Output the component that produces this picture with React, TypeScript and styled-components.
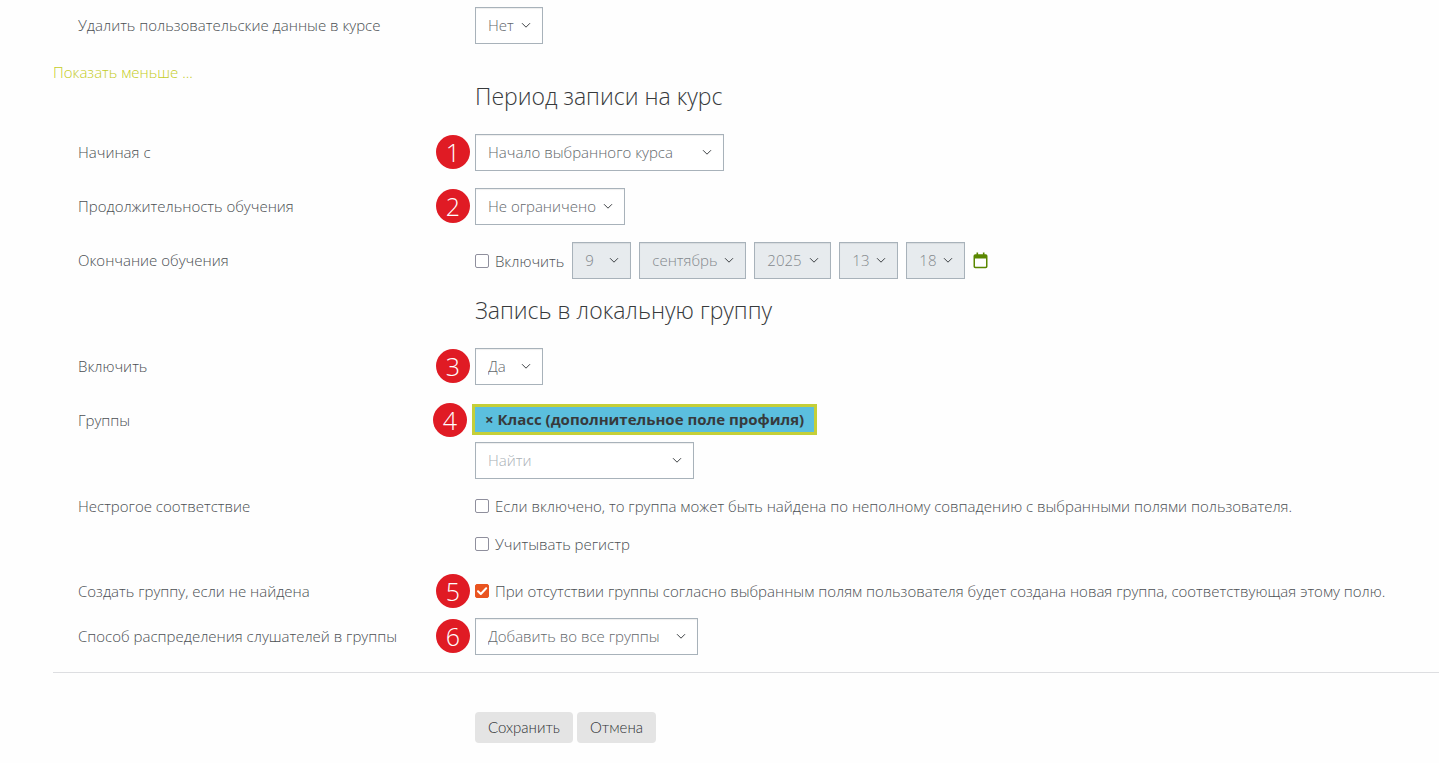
import React from "react";
import styled, { createGlobalStyle } from "styled-components";

const GlobalStyle = createGlobalStyle`
  *, *::before, *::after { box-sizing: border-box; }
  body {
    margin: 0;
    background: #fefefe;
    color: #4b4f53;
    font: 300 15px/20px "Open Sans", "Noto Sans", sans-serif;
  }
`;

const Form = styled.form`
  padding: 7px 0 20px 53px;
`;

const Row = styled.div<{ $space?: number }>`
  display: grid;
  grid-template-columns: minmax(0, 7fr) minmax(0, 17fr);
  padding-left: 25px;
  margin-bottom: ${(p) => p.$space ?? 17}px;
`;

const Caption = styled.div<{ $flush?: boolean }>`
  padding-top: ${(p) => (p.$flush ? 0 : 8)}px;
`;

const Content = styled.div`
  position: relative;
  grid-column: 2;
`;

const Badge = styled.span<{ $top?: number; $left?: number }>`
  position: absolute;
  top: ${(p) => p.$top ?? 1}px;
  left: ${(p) => p.$left ?? -39}px;
  width: 34px;
  height: 34px;
  border-radius: 50%;
  background: #e01b24;
  color: #fff;
  font-size: 25px;
  line-height: 34px;
  text-align: center;
`;

const MoreLink = styled.a`
  display: block;
  width: fit-content;
  margin-top: 18px;
  color: #c4cc1f;
  text-decoration: none;
`;

const Heading = styled.h3`
  grid-column: 2;
  margin: 0;
  color: #373a3c;
  font-size: 23px;
  font-weight: 300;
  line-height: 29px;
`;

const Field = styled.span<{ $width: number }>`
  position: relative;
  display: block;
  width: ${(p) => p.$width}px;
  max-width: 100%;

  select,
  input {
    display: block;
    width: 100%;
    height: 37px;
    margin: 0;
    padding: 0 24px 2px 12px;
    appearance: none;
    border: 1px solid #a8b2ba;
    border-radius: 0;
    background: #fff;
    box-shadow: inset 0 1px 1px rgba(0, 0, 0, 0.07);
    color: #63686c;
    font: inherit;
    opacity: 1;
  }

  select:disabled {
    background: #e7ebee;
    color: #84898d;
  }

  input::placeholder {
    color: #aab0b6;
    opacity: 1;
  }

  svg {
    position: absolute;
    top: 15px;
    right: 12px;
    pointer-events: none;
  }
`;

const DateLine = styled.div`
  display: flex;
  flex-wrap: wrap;
  align-items: center;
  gap: 8px;
`;

const CheckLabel = styled.label`
  display: flex;
  align-items: flex-start;
  gap: 6px;

  & + & {
    margin-top: 18px;
  }
`;

const CheckBox = styled.span`
  position: relative;
  flex: none;
  width: 14px;
  height: 14px;
  margin-top: 3px;

  input {
    display: block;
    width: 14px;
    height: 14px;
    margin: 0;
    appearance: none;
    border: 1px solid #8f8f9d;
    border-radius: 2px;
    background: #fff;
  }

  input:checked {
    border-color: #e95420;
    background: #e95420;
  }

  svg {
    position: absolute;
    inset: 0;
    display: none;
    pointer-events: none;
  }

  input:checked + svg {
    display: block;
  }
`;

const IconButton = styled.button`
  padding: 0;
  border: 0;
  background: none;
  line-height: 0;
`;

const Tag = styled.button`
  display: block;
  height: 31px;
  margin: 2px 0 7px -3px;
  padding: 0 10px;
  border: 3px solid #c5cf38;
  background: #5bbfde;
  color: #373a3c;
  font: 700 15px/25px "Open Sans", "Noto Sans", sans-serif;
  white-space: nowrap;
`;

const Footer = styled.div`
  border-top: 1px solid #dddee1;
  padding-top: 39px;

  ${Row} {
    margin-bottom: 0;
  }
`;

const Actions = styled.div`
  grid-column: 2;
  display: flex;
  gap: 4px;
`;

const Button = styled.button`
  height: 31px;
  padding: 0 13px;
  border: 0;
  border-radius: 4px;
  background: #e4e4e4;
  color: #2f3234;
  font: 300 15px/31px Lato, "Open Sans", sans-serif;
`;

const Chevron = () => (
  <svg width="10" height="7" viewBox="0 0 10 7" fill="none" stroke="#3f4346" strokeWidth="1" aria-hidden="true">
    <path d="M1 1.2 5 5.2 9 1.2" />
  </svg>
);

type DropDownProps = { value: string; width: number; label?: string; id?: string; disabled?: boolean };

const DropDown = ({ value, width, label, id, disabled }: DropDownProps) => (
  <Field $width={width}>
    <select id={id} aria-label={label} disabled={disabled} defaultValue={value}>
      <option>{value}</option>
    </select>
    <Chevron />
  </Field>
);

const Check = ({ text, checked, id }: { text: string; checked?: boolean; id?: string }) => (
  <CheckLabel>
    <CheckBox>
      <input type="checkbox" defaultChecked={checked} id={id} />
      <svg width="14" height="14" viewBox="0 0 14 14" fill="none" stroke="#fff" strokeWidth="2" aria-hidden="true">
        <path d="M3 7.2 5.8 10 11.2 4.2" strokeLinecap="round" strokeLinejoin="round" />
      </svg>
    </CheckBox>
    <span>{text}</span>
  </CheckLabel>
);

const dateParts = [
  { label: "День", value: "9", width: 59 },
  { label: "Месяц", value: "сентябрь", width: 107 },
  { label: "Год", value: "2025", width: 77 },
  { label: "Час", value: "13", width: 59 },
  { label: "Минута", value: "18", width: 59 },
];

export default function App() {
  return (
    <>
      <GlobalStyle />
      <Form onSubmit={(e) => e.preventDefault()}>
        <Row>
          <Caption as="label" htmlFor="wipe">Удалить пользовательские данные в курсе</Caption>
          <Content><DropDown id="wipe" value="Нет" width={68} /></Content>
        </Row>
        <MoreLink href="#">Показать меньше ...</MoreLink>

        <Row $space={23}><Heading>Период записи на курс</Heading></Row>
        <Row>
          <Caption as="label" htmlFor="start">Начиная с</Caption>
          <Content>
            <Badge>1</Badge>
            <DropDown id="start" value="Начало выбранного курса" width={249} />
          </Content>
        </Row>
        <Row>
          <Caption as="label" htmlFor="duration">Продолжительность обучения</Caption>
          <Content>
            <Badge>2</Badge>
            <DropDown id="duration" value="Не ограничено" width={150} />
          </Content>
        </Row>
        <Row>
          <Caption>Окончание обучения</Caption>
          <Content>
            <DateLine>
              <Check text="Включить" />
              {dateParts.map((part) => (
                <DropDown key={part.label} {...part} disabled />
              ))}
              <IconButton type="button" aria-label="Календарь">
                <svg width="15" height="17" viewBox="0 0 15 17" aria-hidden="true">
                  <path
                    fill="#5a8700"
                    fillRule="evenodd"
                    d="M3.5 0.5h1.6v1.7h4.8V0.5h1.6v1.7h1.2a1.8 1.8 0 0 1 1.8 1.8v10.5a1.8 1.8 0 0 1-1.8 1.8H2.3a1.8 1.8 0 0 1-1.8-1.8V4a1.8 1.8 0 0 1 1.8-1.8h1.2zM2 6.5v7.8c0 .3.2.5.5.5h10c.3 0 .5-.2.5-.5V6.5z"
                  />
                </svg>
              </IconButton>
            </DateLine>
          </Content>
        </Row>

        <Row $space={23}><Heading>Запись в локальную группу</Heading></Row>
        <Row>
          <Caption as="label" htmlFor="enable">Включить</Caption>
          <Content>
            <Badge>3</Badge>
            <DropDown id="enable" value="Да" width={68} />
          </Content>
        </Row>
        <Row>
          <Caption as="label" htmlFor="groups">Группы</Caption>
          <Content>
            <Badge $left={-42}>4</Badge>
            <Tag type="button">× Класс (дополнительное поле профиля)</Tag>
            <Field $width={219}>
              <input id="groups" type="text" placeholder="Найти" />
              <Chevron />
            </Field>
          </Content>
        </Row>
        <Row $space={27}>
          <Caption $flush>Нестрогое соответствие</Caption>
          <Content>
            <Check text="Если включено, то группа может быть найдена по неполному совпадению с выбранными полями пользователя." />
            <Check text="Учитывать регистр" />
          </Content>
        </Row>
        <Row>
          <Caption as="label" htmlFor="create" $flush>Создать группу, если не найдена</Caption>
          <Content>
            <Badge $top={-7}>5</Badge>
            <Check
              id="create"
              checked
              text="При отсутствии группы согласно выбранным полям пользователя будет создана новая группа, соответствующая этому полю."
            />
          </Content>
        </Row>
        <Row>
          <Caption as="label" htmlFor="method">Способ распределения слушателей в группы</Caption>
          <Content>
            <Badge>6</Badge>
            <DropDown id="method" value="Добавить во все группы" width={223} />
          </Content>
        </Row>

        <Footer>
          <Row>
            <Actions>
              <Button type="submit">Сохранить</Button>
              <Button type="button">Отмена</Button>
            </Actions>
          </Row>
        </Footer>
      </Form>
    </>
  );
}
